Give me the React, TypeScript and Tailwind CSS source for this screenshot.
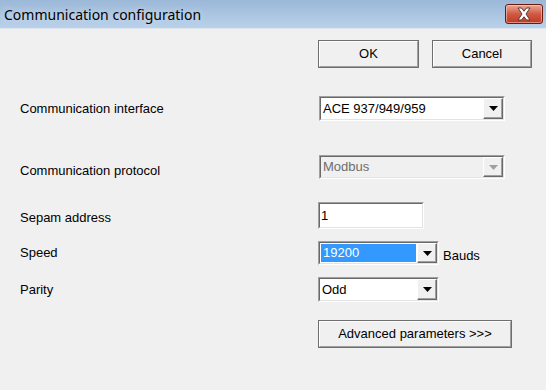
import React from "react";

const font = { fontFamily: '"Liberation Sans", Arial, sans-serif' };

function Arrow({ disabled }: { disabled?: boolean }) {
  return (
    <div className="w-[20px] h-full flex items-center justify-center bg-[#f0f0f0] border-t border-l border-t-white border-l-white border-b border-r border-b-[#696969] border-r-[#696969] shadow-[inset_-1px_-1px_0_#a0a0a0]">
      <svg width="9" height="5" viewBox="0 0 9 5">
        <polygon points="0,0 9,0 4.5,5" fill={disabled ? "#a0a0a0" : "#000"} />
      </svg>
    </div>
  );
}

function Combo({
  width,
  height,
  text,
  disabled,
  selected,
}: {
  width: string;
  height: string;
  text: string;
  disabled?: boolean;
  selected?: boolean;
}) {
  return (
    <div
      className={`${width} ${height} border border-t-[#a0a0a0] border-l-[#a0a0a0] border-b-white border-r-white`}
    >
      <div
        className={`h-full w-full flex border border-t-[#696969] border-l-[#696969] border-b-[#e3e3e3] border-r-[#e3e3e3] ${
          disabled ? "bg-[#f0f0f0]" : "bg-white"
        }`}
      >
        <div className="flex-1 flex items-center p-[1px]">
          {selected ? (
            <div className="h-full w-full flex items-center bg-[#3399ff] text-white pl-[1px] border border-dotted border-[#d0741a]">
              <span className="text-[13px]">{text}</span>
            </div>
          ) : (
            <span
              className={`text-[13px] pl-[1px] ${disabled ? "text-[#6d6d6d]" : "text-black"}`}
            >
              {text}
            </span>
          )}
        </div>
        <Arrow disabled={disabled} />
      </div>
    </div>
  );
}

function Button({ width, label }: { width: string; label: string }) {
  return (
    <div className={`${width} h-[28px] border border-[#6e6e6e] bg-[#f0f0f0]`}>
      <div className="h-full w-full flex items-center justify-center border border-t-white border-l-white border-b-[#a0a0a0] border-r-[#a0a0a0] text-[13px] text-black">
        {label}
      </div>
    </div>
  );
}

export default function App() {
  return (
    <div className="w-[546px] h-[390px] bg-[#f0f0f0] flex flex-col overflow-hidden" style={font}>
      <div className="h-[28px] bg-gradient-to-b from-[#9cb8d8] to-[#b9d1ea] flex items-start justify-between">
        <span
          className="pl-[4px] pt-[4px] text-[14px] text-black"
          style={{ fontFamily: '"Noto Sans", "Open Sans", sans-serif', textShadow: "0 0 6px rgba(255,255,255,0.6)" }}
        >
          Communication configuration
        </span>
        <div className="mt-[4px] mr-[3px] w-[38px] h-[20px] rounded-[3px] border border-[#6b1a12] bg-gradient-to-b from-[#e8a795] via-[#cf5a43] to-[#c13a22] flex items-center justify-center shadow-[inset_0_0_0_1px_rgba(255,220,210,0.5)]">
          <svg width="16" height="14" viewBox="0 0 16 14">
            <path
              d="M2 1 L5.5 1 L8 4.2 L10.5 1 L14 1 L10 7 L14 13 L10.5 13 L8 9.8 L5.5 13 L2 13 L6 7 Z"
              fill="#fff"
              stroke="#5b3a35"
              strokeWidth="1"
              strokeLinejoin="round"
            />
          </svg>
        </div>
      </div>
      <div className="h-[1px] bg-[#dfe6ee]" />
      <div className="flex flex-col pl-[20px] pt-[11px]">
        <div className="flex h-[28px] pl-[298px] gap-[13px]">
          <Button width="w-[101px]" label="OK" />
          <Button width="w-[100px]" label="Cancel" />
        </div>

        <div className="flex items-center mt-[28px] h-[25px]">
          <span className="w-[299px] text-[13px] text-black">Communication interface</span>
          <Combo width="w-[186px]" height="h-[25px]" text="ACE 937/949/959" />
        </div>

        <div className="flex items-center mt-[34px] h-[24px]">
          <span className="w-[299px] text-[13px] text-black pt-[8px]">Communication protocol</span>
          <Combo width="w-[186px]" height="h-[24px]" text="Modbus" disabled />
        </div>

        <div className="flex items-center mt-[23px] h-[27px]">
          <span className="w-[298px] text-[13px] text-black pt-[5px]">Sepam address</span>
          <div className="w-[106px] h-[27px] border border-t-[#a0a0a0] border-l-[#a0a0a0] border-b-white border-r-white">
            <div className="h-full w-full bg-white border border-t-[#696969] border-l-[#696969] border-b-[#e3e3e3] border-r-[#e3e3e3] flex items-center pl-[1px]">
              <span className="text-[13px] text-black">1</span>
            </div>
          </div>
        </div>

        <div className="flex items-center mt-[12px] h-[24px]">
          <span className="w-[298px] text-[13px] text-black">Speed</span>
          <Combo width="w-[121px]" height="h-[24px]" text="19200" selected />
          <span className="ml-[4px] text-[13px] text-black pt-[5px]">Bauds</span>
        </div>

        <div className="flex items-center mt-[12px] h-[25px]">
          <span className="w-[298px] text-[13px] text-black">Parity</span>
          <Combo width="w-[121px]" height="h-[25px]" text="Odd" />
        </div>

        <div className="flex mt-[18px] pl-[298px]">
          <Button width="w-[194px]" label="Advanced parameters >>>" />
        </div>
      </div>
    </div>
  );
}
